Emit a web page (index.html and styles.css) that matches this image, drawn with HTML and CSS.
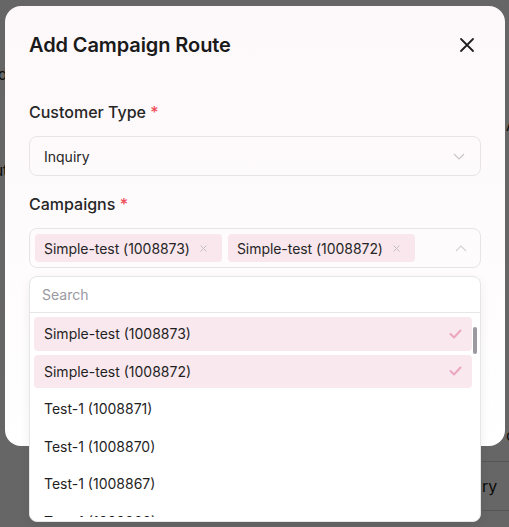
FILE: index.html
```html
<!DOCTYPE html>
<html lang="en">
<head>
<meta charset="utf-8">
<title>Add Campaign Route</title>
<link rel="stylesheet" href="styles.css">
</head>
<body>
<div class="page">
  <div class="page-row r1"><span class="cut-left">Sold</span></div>
  <div class="page-row r2"><span class="cut-left">Routing</span></div>
  <div class="page-right">
    <div class="pr-cell top">A</div>
    <div class="pr-cell mid">c</div>
    <div class="pr-table">
      <div class="pr-line"></div>
      <div class="pr-text">Inquiry</div>
      <div class="pr-line"></div>
    </div>
  </div>
</div>
<div class="overlay"></div>

<div class="modal" role="dialog" aria-labelledby="mtitle">
  <div class="modal-header">
    <h2 id="mtitle" class="modal-title">Add Campaign Route</h2>
    <button class="close-btn" aria-label="Close">
      <svg width="16" height="16" viewBox="0 0 16 16"><path d="M2 2 L14 14 M14 2 L2 14" stroke="#1f1f1f" stroke-width="1.8" stroke-linecap="round" fill="none"/></svg>
    </button>
  </div>

  <div class="field">
    <label class="label">Customer Type <span class="req">*</span></label>
    <div class="select">
      <span class="select-value">Inquiry</span>
      <svg class="chev" width="12" height="7" viewBox="0 0 12 7"><path d="M1 1 L6 6 L11 1" stroke="#c9c6c8" stroke-width="1.2" fill="none"/></svg>
    </div>
  </div>

  <div class="field">
    <label class="label">Campaigns <span class="req">*</span></label>
    <div class="multi-wrap">
      <div class="select multi">
        <div class="tags">
          <span class="tag">Simple-test (1008873)<svg class="tag-x" width="7" height="7" viewBox="0 0 7 7"><path d="M0.5 0.5 L6.5 6.5 M6.5 0.5 L0.5 6.5" stroke="#c2bfc1" stroke-width="1" fill="none"/></svg></span>
          <span class="tag">Simple-test (1008872)<svg class="tag-x" width="7" height="7" viewBox="0 0 7 7"><path d="M0.5 0.5 L6.5 6.5 M6.5 0.5 L0.5 6.5" stroke="#c2bfc1" stroke-width="1" fill="none"/></svg></span>
        </div>
        <svg class="chev up" width="12" height="7" viewBox="0 0 12 7"><path d="M1 6 L6 1 L11 6" stroke="#d6d3d5" stroke-width="1.2" fill="none"/></svg>
      </div>

      <div class="dropdown">
        <div class="search">Search</div>
        <div class="list-area">
          <ul class="list">
            <li class="item selected">Simple-test (1008873)<svg class="check" width="13" height="10" viewBox="0 0 13 10"><path d="M1.5 5 L5 8.5 L11.5 1.5" stroke="#eaa6bf" stroke-width="2" fill="none" stroke-linecap="round" stroke-linejoin="round"/></svg></li>
            <li class="item selected">Simple-test (1008872)<svg class="check" width="13" height="10" viewBox="0 0 13 10"><path d="M1.5 5 L5 8.5 L11.5 1.5" stroke="#eaa6bf" stroke-width="2" fill="none" stroke-linecap="round" stroke-linejoin="round"/></svg></li>
            <li class="item">Test-1 (1008871)</li>
            <li class="item">Test-1 (1008870)</li>
            <li class="item">Test-1 (1008867)</li>
            <li class="item">Test-1 (1008866)</li>
          </ul>
          <div class="scrollbar"><div class="thumb"></div></div>
        </div>
      </div>
    </div>
  </div>
</div>
</body>
</html>
```

FILE: styles.css
```css
* { box-sizing: border-box; }
html, body { margin: 0; padding: 0; }
body {
  width: 509px;
  height: 527px;
  overflow: hidden;
  background: #ffffff;
  font-family: Inter, "Noto Sans", sans-serif;
  color: #1a1a1a;
  position: relative;
}

/* background page */
.page {
  width: 509px;
  height: 527px;
  display: flex;
  flex-direction: column;
  font-size: 16px;
  color: #222;
}
.page-row { height: 24px; white-space: nowrap; }
.r1 { margin-top: 64px; }
.r2 { margin-top: 72px; }
.cut-left { display: inline-block; margin-left: -26px; }
.page-right {
  position: absolute;
  left: 482px;
  top: 0;
  width: 60px;
  height: 527px;
  display: flex;
  flex-direction: column;
}
.pr-cell { padding-left: 24px; font-size: 16px; height: 24px; line-height: 24px; }
.pr-cell.top { margin-top: 113px; }
.pr-cell.mid { margin-top: 286px; }
.pr-table { margin-top: 14px; }
.pr-line { height: 1px; background: #d8d8d8; }
.pr-text { height: 48px; line-height: 48px; margin-left: -37px; font-size: 16px; }

.overlay {
  position: absolute;
  inset: 0;
  background: rgba(0, 0, 0, 0.6);
}

/* modal */
.modal {
  position: absolute;
  left: 5px;
  top: 6px;
  width: 500px;
  height: 440px;
  border-radius: 16px;
  background: linear-gradient(180deg, #fdf8f9 0%, #fefbfc 50%, #ffffff 100%);
  padding: 24px 24px;
}
.modal-header {
  display: flex;
  align-items: center;
  justify-content: space-between;
  height: 30px;
}
.modal-title {
  margin: 0;
  font-size: 20px;
  font-weight: 600;
  color: #1a1a1a;
  letter-spacing: -0.1px;
}
.close-btn {
  width: 28px;
  height: 28px;
  padding: 0;
  border: 0;
  background: transparent;
  display: flex;
  align-items: center;
  justify-content: center;
}

.field { display: flex; flex-direction: column; }
.modal-header + .field { margin-top: 40px; }
.field + .field { margin-top: 16px; }
.label {
  font-size: 16px;
  font-weight: 500;
  line-height: 24px;
  color: #262626;
  margin-bottom: 12px;
}
.req { color: #f04d5a; }

.select {
  height: 40px;
  border: 1px solid #e8e4e6;
  border-radius: 8px;
  display: flex;
  align-items: center;
  justify-content: space-between;
  padding: 0 15px 0 14px;
  font-size: 14px;
  color: #262626;
  background: transparent;
}
.chev { display: block; }
.multi { padding: 0 13px 0 5px; }
.multi-wrap { position: relative; }
.tags { display: flex; gap: 6px; }
.tag {
  height: 28px;
  display: inline-flex;
  align-items: center;
  background: #f9e7ed;
  border-radius: 4px;
  padding: 0 15px 0 9px;
  font-size: 14px;
  color: #262626;
  letter-spacing: -0.05px;
}
.tag-x { display: block; margin-left: 10px; }

.dropdown {
  position: absolute;
  left: 0;
  right: 0;
  top: 48px;
  height: 246px;
  background: #ffffff;
  border: 1px solid #e6e6e6;
  border-radius: 8px;
  display: flex;
  flex-direction: column;
  padding-bottom: 4px;
  box-shadow: 0 4px 12px rgba(0,0,0,0.06);
}
.search {
  height: 36px;
  flex: none;
  border-bottom: 1px solid #e6e6e6;
  padding-left: 12px;
  display: flex;
  align-items: center;
  font-size: 14px;
  color: #9a98a0;
}
.list-area {
  flex: 1;
  display: flex;
  overflow: hidden;
}
.list {
  list-style: none;
  margin: 0;
  padding: 4px 0 0 4px;
  flex: 1;
  display: flex;
  flex-direction: column;
  gap: 4px;
}
.item {
  height: 33.5px;
  flex: none;
  border-radius: 4px;
  display: flex;
  align-items: center;
  justify-content: space-between;
  padding: 0 10px 0 10px;
  font-size: 14px;
  color: #1f1f1f;
}
.item.selected { background: #f9e8ee; }
.scrollbar {
  width: 8px;
  flex: none;
  padding: 14px 0 0 1px;
}
.thumb {
  width: 4px;
  height: 27px;
  border-radius: 2px;
  background: #9c99a3;
}
```
